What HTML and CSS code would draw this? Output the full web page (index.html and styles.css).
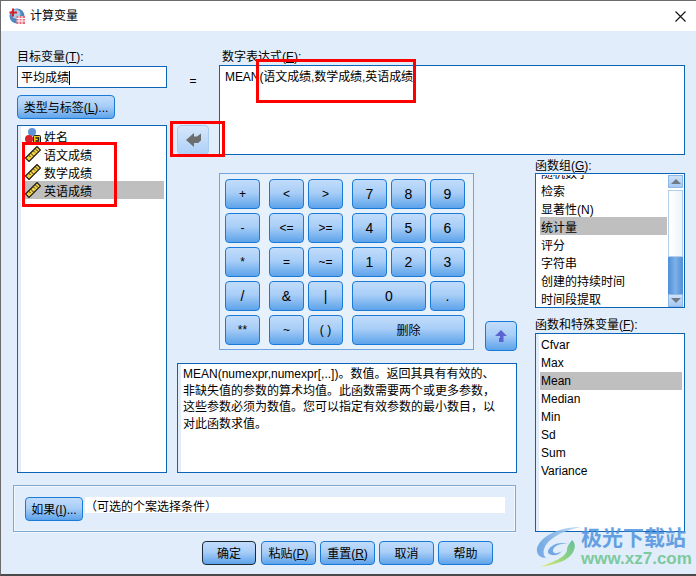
FILE: index.html
```html
<!DOCTYPE html>
<html lang="zh">
<head>
<meta charset="utf-8">
<title>计算变量</title>
<link rel="stylesheet" href="styles.css">
</head>
<body>
<svg class="defs" width="0" height="0" aria-hidden="true">
  <symbol id="ruler" viewBox="0 0 16 16">
    <path d="M0.500 12 12 0.500 15.500 4 4 15.500Z" fill="#f5d23c" stroke="#1c1c1c" stroke-width="1.200"/>
    <path d="M3.500 9 5.500 11M5.500 7 8.500 10M8 4.500 10 6.500M10 2.500 13 5.500" stroke="#2a2a2a" stroke-width="1"/>
  </symbol>
</svg>
<div class="window">
  <header class="titlebar">
    <svg class="app-icon" viewBox="0 0 16 16" width="16" height="16">
      <circle cx="8" cy="8" r="7.500" fill="#4f86bf"/>
      <circle cx="7" cy="6" r="4.500" fill="#a9cbe8"/>
      <path d="M4 0.500v8M0.500 4.500h7.500" stroke="#d3222a" stroke-width="2"/>
      <rect x="7.500" y="8" width="8.500" height="8" fill="#e66a7c"/>
      <path d="M7.500 10.500h8.500M7.500 13h8.500M10 8v8M13 8v8" stroke="#fff" stroke-width="1"/>
    </svg>
    <span class="title-text">计算变量</span>
    <svg class="close" viewBox="0 0 11 11" width="11" height="11"><path d="M0.500 0.500 10.500 10.500M10.500 0.500 0.500 10.500" stroke="#111" stroke-width="1.100"/></svg>
  </header>

  <main class="form">
    <section class="left">
      <label class="label">目标变量(<u>T</u>):</label>
      <div class="input"><span class="caret-text">平均成绩</span></div>
      <button class="btn cjk type-btn">类型与标签(<u>L</u>)...</button>
      <ul class="list strip varlist">
        <li class="row">
          <svg class="ico" viewBox="0 0 16 16" width="16" height="16">
            <circle cx="7" cy="4" r="4" fill="#5f93d6"/>
            <circle cx="4" cy="11" r="4" fill="#d5222c"/>
            <rect x="8.500" y="7.500" width="7" height="8" rx="1" fill="#f3c51e" stroke="#222"/>
            <path d="M10.500 13h3v-3h-3" stroke="#222" stroke-width="1.300" fill="none"/>
          </svg>
          姓名
        </li>
        <li class="row"><svg class="ico" width="16" height="16"><use href="#ruler"/></svg>语文成绩</li>
        <li class="row"><svg class="ico" width="16" height="16"><use href="#ruler"/></svg>数学成绩</li>
        <li class="row selected"><svg class="ico" width="16" height="16"><use href="#ruler"/></svg>英语成绩</li>
      </ul>
    </section>

    <section class="transfer">
      <span class="equals">=</span>
      <button class="btn arrow-btn" disabled>
        <svg viewBox="0 0 15 14" width="15" height="14"><path d="M0 7 8 0V3.500H11L15 0.500V7.500L12 10H8V14Z" fill="#6d6d6d"/></svg>
      </button>
    </section>

    <section class="expr">
      <label class="label">数字表达式(<u>E</u>):</label>
      <div class="expr-box"><span class="caret-text">MEAN(语文成绩,数学成绩,英语成绩</span></div>
    </section>

    <section class="pad-area">
      <div class="keypad">
        <div class="keys one">
          <button class="btn key">+</button>
          <button class="btn key">-</button>
          <button class="btn key">*</button>
          <button class="btn key big">/</button>
          <button class="btn key">**</button>
        </div>
        <div class="keys two">
          <button class="btn key">&lt;</button>
          <button class="btn key">&gt;</button>
          <button class="btn key">&lt;=</button>
          <button class="btn key">&gt;=</button>
          <button class="btn key">=</button>
          <button class="btn key">~=</button>
          <button class="btn key big">&amp;</button>
          <button class="btn key big">|</button>
          <button class="btn key">~</button>
          <button class="btn key">( )</button>
        </div>
        <div class="keys three">
          <button class="btn key big">7</button>
          <button class="btn key big">8</button>
          <button class="btn key big">9</button>
          <button class="btn key big">4</button>
          <button class="btn key big">5</button>
          <button class="btn key big">6</button>
          <button class="btn key big">1</button>
          <button class="btn key big">2</button>
          <button class="btn key big">3</button>
          <button class="btn key big span2">0</button>
          <button class="btn key big">.</button>
          <button class="btn cjk key span3">删除</button>
        </div>
      </div>
      <button class="btn up-btn">
        <svg viewBox="0 0 12 12" width="12" height="12"><path d="M6 0 12 6H8.500V12H4V8H5V6H0Z" fill="#5a63cf"/></svg>
      </button>
    </section>

    <section class="desc strip">MEAN(numexpr,numexpr[,..])。数值。返回其具有有效的、<br>非缺失值的参数的算术均值。此函数需要两个或更多参数，<br>这些参数必须为数值。您可以指定有效参数的最小数目，以<br>对此函数求值。</section>

    <section class="condition">
      <button class="btn cjk if-btn">如果(<u>I</u>)...</button>
      <div class="cond-field">（可选的个案选择条件）</div>
    </section>

    <aside class="right">
      <label class="label">函数组(<u>G</u>):</label>
      <div class="list group-list">
        <ul class="group-items">
          <li class="row">随机数字</li>
          <li class="row">检索</li>
          <li class="row">显著性(N)</li>
          <li class="row selected">统计量</li>
          <li class="row">评分</li>
          <li class="row">字符串</li>
          <li class="row">创建的持续时间</li>
          <li class="row">时间段提取</li>
        </ul>
        <div class="scrollbar">
          <span class="sb-btn"><i class="tri up"></i></span>
          <span class="sb-thumb"></span>
          <span class="sb-track"></span>
          <span class="sb-btn"><i class="tri down"></i></span>
        </div>
      </div>
      <label class="label second">函数和特殊变量(<u>F</u>):</label>
      <ul class="list strip fn-list">
        <li class="row">Cfvar</li>
        <li class="row">Max</li>
        <li class="row selected">Mean</li>
        <li class="row">Median</li>
        <li class="row">Min</li>
        <li class="row">Sd</li>
        <li class="row">Sum</li>
        <li class="row">Variance</li>
      </ul>
    </aside>
  </main>

  <footer class="actions">
    <button class="btn cjk action default">确定</button>
    <button class="btn cjk action">粘贴(<u>P</u>)</button>
    <button class="btn cjk action">重置(<u>R</u>)</button>
    <button class="btn cjk action">取消</button>
    <button class="btn cjk action">帮助</button>
  </footer>

  <div class="mark mark-list"></div>
  <div class="mark mark-arrow"></div>
  <div class="mark mark-expr"></div>

  <div class="watermark">
    <svg class="wm-logo" viewBox="0 0 46 42" width="46" height="42">
      <defs>
        <linearGradient id="wmA" x1="0" y1="0" x2="1" y2="0"><stop offset="0" stop-color="#5f9de0"/><stop offset="1" stop-color="#bcd9f2"/></linearGradient>
        <linearGradient id="wmB" x1="0" y1="1" x2="1" y2="0"><stop offset="0" stop-color="#ecec5c"/><stop offset="0.500" stop-color="#86d06c"/><stop offset="1" stop-color="#4fb88a"/></linearGradient>
      </defs>
      <path d="M45 1C26 1 6 8 1 22 0 29 5 32 10 32 5 27 8 18 17 12 25 6 36 3 45 1Z" fill="url(#wmA)"/>
      <path d="M12 25C14 19 24 15 32 18 24 17 18 20 17 24 16 28 22 28 26 25 22 31 11 30 12 25Z" fill="#5f9de0"/>
      <path d="M36 14C42 19 38 30 27 35 20 38 12 40 4 41 16 36 30 32 31 24 31 20 34 17 36 14Z" fill="url(#wmB)"/>
    </svg>
    <div class="wm-text">
      <span class="wm-cn">极光下载站</span>
      <span class="wm-url">www.xz7.com</span>
    </div>
  </div>
</div>
</body>
</html>
```

FILE: styles.css
```css
* { box-sizing: border-box; }
html, body { margin: 0; padding: 0; }
body {
  width: 696px;
  height: 576px;
  overflow: hidden;
  background: #e1edfa;
  font-family: "Liberation Sans", "Noto Sans CJK SC", sans-serif;
  font-size: 12px;
  line-height: 16px;
  color: #000;
}
.defs { position: absolute; }
ul { list-style: none; margin: 0; padding: 0; }

.window {
  position: relative;
  width: 696px;
  height: 576px;
  background: #e1edfa;
  border-top: 1px solid #6b6b6b;
  border-left: 1px solid #6b6b6b;
  border-bottom: 2px solid #4a4a4a;
  overflow: hidden;
}

.titlebar {
  height: 30px;
  background: #fff;
  display: flex;
  align-items: center;
  padding: 0 10px 0 8px;
}
.app-icon { flex: none; }
.title-text { margin-left: 5px; }
.close { margin-left: auto; }

.form {
  display: grid;
  grid-template-columns: 150px 52px 298px 18px 150px;
  grid-template-rows: 106px 208px 110px 59px;
  padding: 18px 0 0 16px;
}

.label { display: block; height: 16px; white-space: nowrap; }

.left {
  grid-column: 1;
  grid-row: 1 / 4;
  display: flex;
  flex-direction: column;
}
.input {
  height: 22px;
  margin-top: 1px;
  background: #fff;
  border: 1px solid #0c64b8;
  padding: 3px 3px 0;
  line-height: 16px;
}
.caret-text { border-right: 1px solid #000; }

.btn {
  font: inherit;
  color: #000;
  padding: 0;
  border: 1px solid #1a7ad8;
  border-radius: 4px;
  background: linear-gradient(#c2dcfb, #a9cef7 45%, #5da3ea);
  display: flex;
  align-items: center;
  justify-content: center;
  white-space: nowrap;
}
.btn.cjk { padding-top: 2px; }
.type-btn { width: 98px; height: 24px; margin-top: 7px; }

.list {
  background: #fff;
  border: 1px solid #0c64b8;
}
.strip {
  background: linear-gradient(90deg, #e1edfa 3px, #fff 3px);
}
.row {
  height: 18px;
  line-height: 18px;
  padding-top: 4px;
  white-space: nowrap;
  display: flex;
  align-items: center;
}
.selected { background: #bfbfbf; }

.varlist {
  flex: 1;
  margin-top: 6px;
  padding: 1px 2px 0 7px;
}
.ico { flex: none; margin: 0 3px 4px 0; }

.transfer {
  grid-column: 2;
  grid-row: 1;
  display: flex;
  flex-direction: column;
  align-items: center;
  padding-top: 24px;
}
.arrow-btn {
  width: 32px;
  height: 30px;
  margin-top: auto;
  border-color: #a8ccf1;
  background: linear-gradient(#d6e7fb, #aed0f6);
}

.expr { grid-column: 3 / 6; grid-row: 1; display: flex; flex-direction: column; }
.expr .label { padding-left: 3px; }
.expr-box {
  flex: 1;
  background: #fff;
  border: 1px solid #0c64b8;
  padding: 3px 5px 0;
  line-height: 16px;
  letter-spacing: -0.07px;
}

.pad-area {
  grid-column: 3 / 5;
  grid-row: 2;
  display: flex;
  align-items: flex-start;
  gap: 11px;
  padding-top: 18px;
}
.keypad {
  width: 255px;
  height: 177px;
  border: 1px solid #6fa6dd;
  background: #e6f1fc;
  padding: 5px 0 0 5px;
  display: flex;
  gap: 9px;
}
.keys {
  display: grid;
  grid-template-rows: repeat(5, 30px);
  grid-auto-columns: 35px;
  gap: 4px;
}
.keys.one { grid-template-columns: 35px; }
.keys.two { grid-template-columns: 35px 35px; }
.keys.three { grid-template-columns: 35px 35px 35px; }
.key { font-size: 12px; }
.key.big { font-size: 14px; }
.span2 { grid-column: span 2; }
.span3 { grid-column: span 3; }
.up-btn { width: 32px; height: 30px; margin-top: 148px; }

.desc {
  grid-column: 2 / 5;
  grid-row: 3;
  margin: 0 18px 0 10px;
  border: 1px solid #0c64b8;
  padding: 2px 4px 0 5px;
  line-height: 16.670px;
  white-space: nowrap;
  overflow: hidden;
}

.condition {
  grid-column: 1 / 5;
  grid-row: 4;
  margin: 12px 19px 0 -4px;
  border: 1px solid #7fa8d3;
  box-shadow: inset 0 0 0 1px #f1f7fe, 0 1px 0 #f1f7fe;
  padding: 11px 0 0 11px;
  display: flex;
  align-items: flex-start;
  gap: 2px;
}
.if-btn { width: 58px; height: 24px; flex: none; }
.cond-field {
  width: 420px;
  height: 16px;
  background: #fff;
  line-height: 20px;
}

.right {
  grid-column: 5;
  grid-row: 2 / 5;
  padding-top: 3px;
  display: flex;
  flex-direction: column;
}
.right > .label:first-child { height: 15px; }
.group-list {
  height: 135px;
  padding: 1px 1px 0 4px;
  display: flex;
  overflow: hidden;
}
.group-items { flex: 1; min-width: 0; overflow: hidden; }
.group-items .row { padding-left: 1px; }
.group-items .row:first-child { margin-top: -12px; }
.scrollbar {
  flex: none;
  width: 15px;
  margin-left: 1px;
  height: 132px;
  display: flex;
  flex-direction: column;
  background: #fff;
}
.sb-btn {
  flex: none;
  height: 13px;
  background: linear-gradient(#cfe2f9, #a5c8f1);
  border: 1px solid #8db8e8;
  display: flex;
  align-items: center;
  justify-content: center;
}
.sb-thumb {
  flex: none;
  height: 67px;
  margin-top: 2px;
  border: 1px solid #b4cfec;
  background: linear-gradient(90deg, #fff, #eef4fb);
}
.sb-track { flex: 1; background: linear-gradient(90deg, #4f8fd8, #7fb0e8 50%, #4f8fd8); }
.tri { width: 0; height: 0; border-left: 5px solid transparent; border-right: 5px solid transparent; }
.tri.up { border-bottom: 5px solid #707a86; }
.tri.down { border-top: 5px solid #707a86; }

.label.second { height: 25px; padding-top: 9px; }
.fn-list {
  flex: 1;
  padding: 2px 2px 0 4px;
}
.fn-list .row { padding: 0 0 0 1px; }

.actions {
  display: flex;
  gap: 4px;
  margin-top: 9px;
  padding-left: 201px;
}
.action { width: 55px; height: 24px; }
.default { width: 54px; margin-right: 1px; border-color: #1d2a3a; }

.mark {
  position: absolute;
  border: 3px solid #f00;
  pointer-events: none;
}
.mark-list { left: 21px; top: 141px; width: 95px; height: 65px; }
.mark-arrow { left: 169px; top: 120px; width: 55px; height: 36px; }
.mark-expr { left: 255px; top: 58px; width: 160px; height: 44px; }

.watermark {
  position: absolute;
  left: 535px;
  top: 525px;
  display: flex;
  align-items: flex-start;
  opacity: 0.85;
}
.wm-logo { flex: none; }
.wm-text { display: flex; flex-direction: column; margin-left: -1px; }
.wm-cn {
  font-size: 21px;
  line-height: 24px;
  font-weight: 700;
  color: #4f93dd;
  white-space: nowrap;
}
.wm-url {
  font-size: 17px;
  line-height: 18px;
  font-weight: 700;
  color: #6cc48f;
  white-space: nowrap;
}
```
